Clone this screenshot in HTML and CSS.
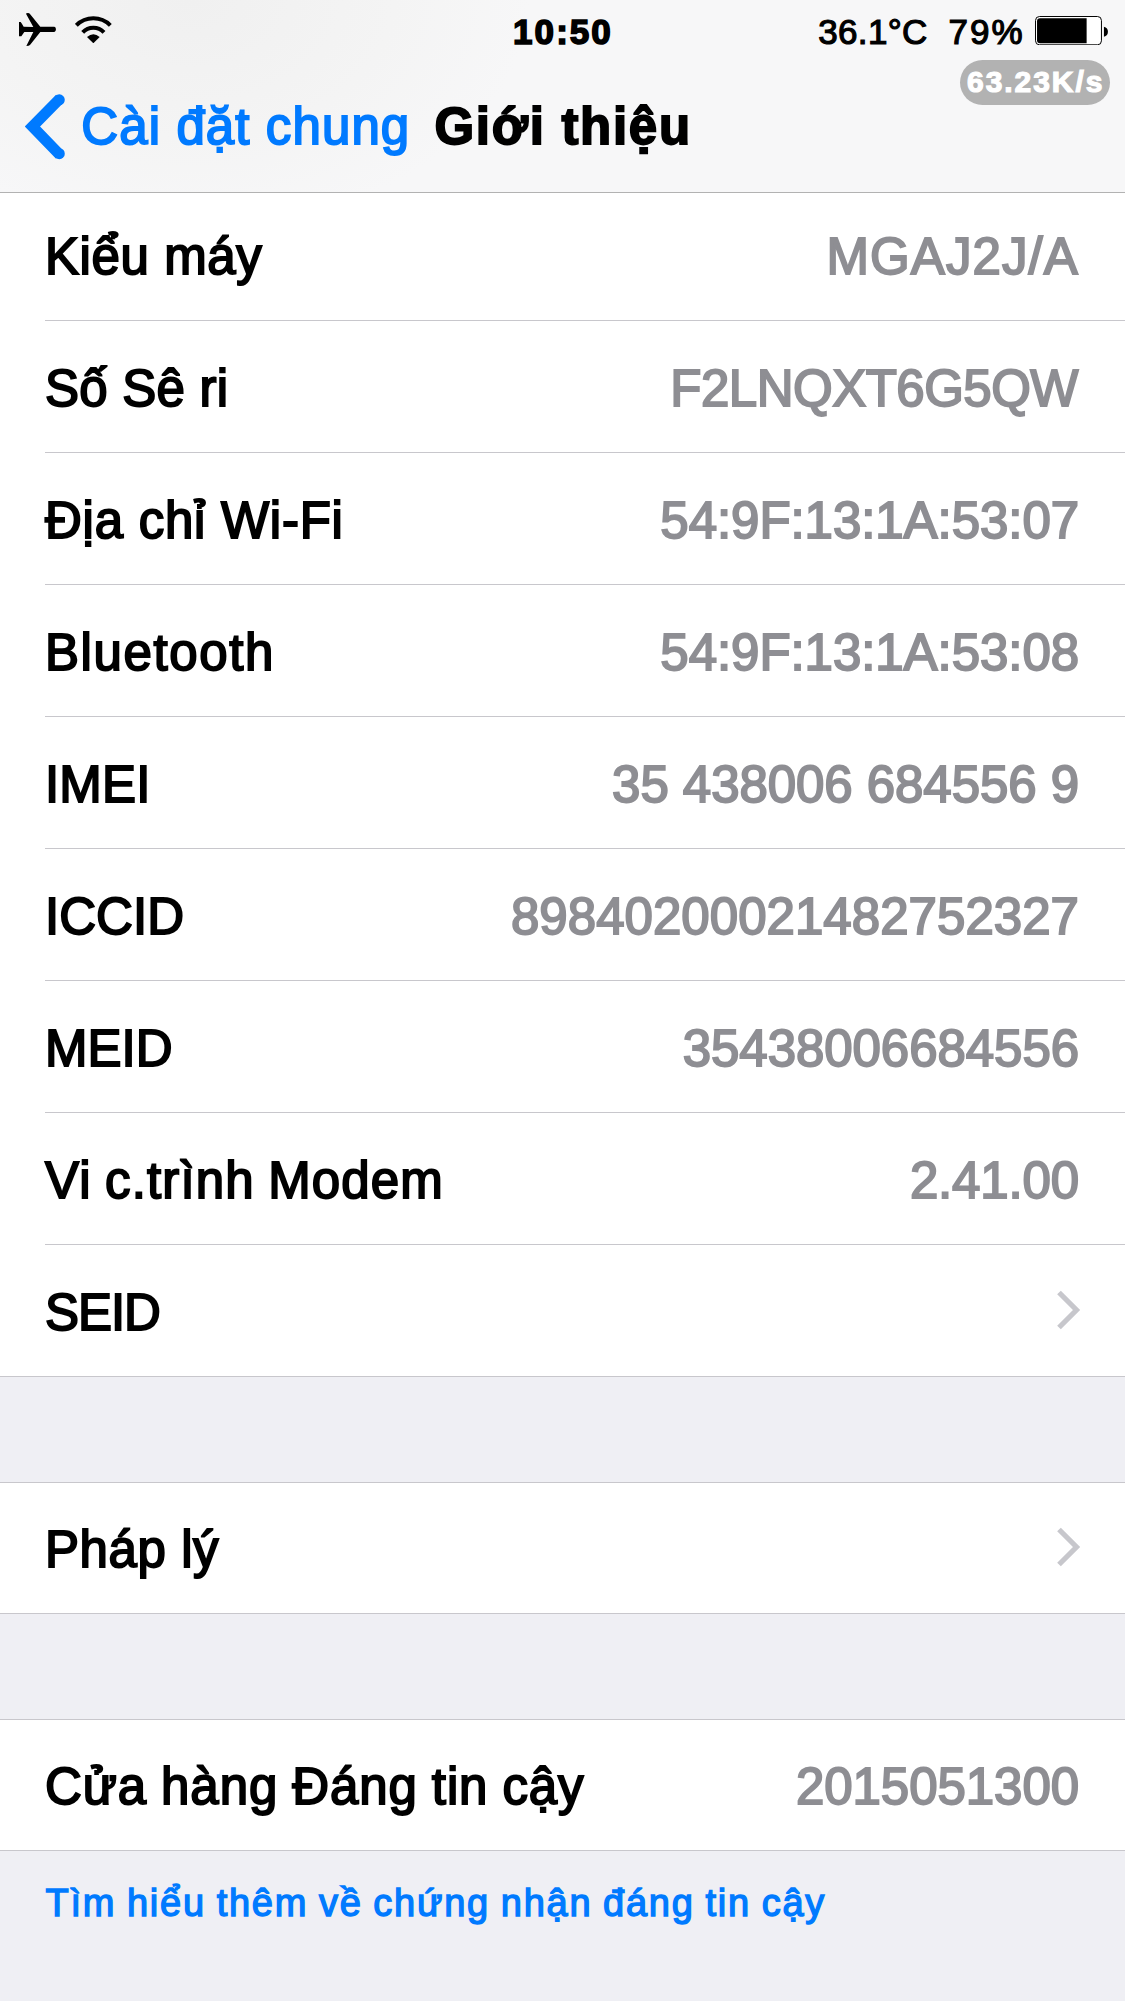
FILE: index.html
```html
<!DOCTYPE html>
<html lang="vi">
<head>
<meta charset="utf-8">
<title>Giới thiệu</title>
<link rel="stylesheet" href="styles.css">
</head>
<body>
<header class="header">
  <div class="status">
    <div class="status-left">
      <svg class="plane" viewBox="57 39 112 99" width="37.3" height="33"><path d="M57 66h5q3 4 9 14l29 1L78 41q1-2 6-2 4 0 6 3l31 38h42q5 1 5 8t-5 8h-42l-31 39q-3 3-11 3l21-42H73l-9 13h-7z"/></svg>
      <svg class="wifi" viewBox="226 47 110 82" width="36.7" height="27.3"><g fill="none" stroke="#000" stroke-width="12"><path d="M230 75A72 72 0 0 1 332 75M249 96A44 44 0 0 1 313 96"/></g><path d="M262 110q19-16 38 0l-19 19z"/></svg>
    </div>
    <div class="clock">10:50</div>
    <div class="status-right">
      <span class="temp">36.1°C</span>
      <span class="percent">79%</span>
      <svg class="battery" viewBox="735 47 220 88" width="73.3" height="29.3"><rect x="736.5" y="48.5" width="198" height="85" rx="12" fill="#fff" stroke="#000" stroke-width="3"/><path d="M750 54h140v75H750q-9 0-9-9V63q0-9 9-9z"/><path d="M942 79q12 3 12 15t-12 15z"/></svg>
    </div>
    <span class="speed">63.23K/s</span>
  </div>
  <nav class="nav">
    <a class="back">
      <svg viewBox="25 94 40 66" width="40" height="66"><path d="M60 98.5L32.5 126.5l27.5 28.5" fill="none" stroke="#007aff" stroke-width="11"/><g fill="#007aff"><circle cx="59.3" cy="99.8" r="5.5"/><circle cx="59.3" cy="153.7" r="5.5"/></g></svg>
      <span>Cài đặt chung</span>
    </a>
    <h1 class="title">Giới thiệu</h1>
  </nav>
</header>
<main>
  <section class="group group-first">
    <div class="row"><span class="label ls-model">Kiểu máy</span><span class="value ls-model-value">MGAJ2J/A</span></div>
    <div class="row"><span class="label ls-serial">Số Sê ri</span><span class="value ls-serial-value">F2LNQXT6G5QW</span></div>
    <div class="row"><span class="label ls-wifi">Địa chỉ Wi-Fi</span><span class="value">54:9F:13:1A:53:07</span></div>
    <div class="row"><span class="label ls-bluetooth">Bluetooth</span><span class="value">54:9F:13:1A:53:08</span></div>
    <div class="row"><span class="label ls-imei">IMEI</span><span class="value">35 438006 684556 9</span></div>
    <div class="row"><span class="label ls-id">ICCID</span><span class="value ls-iccid-value">89840200021482752327</span></div>
    <div class="row"><span class="label ls-id">MEID</span><span class="value">35438006684556</span></div>
    <div class="row"><span class="label ls-modem">Vi c.trình Modem</span><span class="value ls-modem-value">2.41.00</span></div>
    <div class="row"><span class="label ls-seid">SEID</span><svg class="chevron" viewBox="0 0 24 40" width="24" height="40"><path d="M2 2.5L19.5 20 2 37.5"/></svg></div>
  </section>
  <section class="group">
    <div class="row"><span class="label">Pháp lý</span><svg class="chevron" viewBox="0 0 24 40" width="24" height="40"><path d="M2 2.5L19.5 20 2 37.5"/></svg></div>
  </section>
  <section class="group">
    <div class="row"><span class="label ls-trust">Cửa hàng Đáng tin cậy</span><span class="value">2015051300</span></div>
  </section>
  <a class="footnote">Tìm hiểu thêm về chứng nhận đáng tin cậy</a>
</main>
</body>
</html>
```
FILE: styles.css
```css
* { box-sizing: border-box; }

body {
  margin: 0;
  height: 2001px;
  overflow: hidden;
  background: #efeff4;
  font-family: "Liberation Sans", Arial, sans-serif;
  color: #000;
}

svg { display: block; flex: none; }
span, a, h1 { white-space: nowrap; }

/* Header */
.header {
  height: 193px;
  border-bottom: 1px solid #b2b2b2;
  background: radial-gradient(ellipse 340px 230px at 190px 0, #f0f0f0, #f4f4f4 60%, rgba(247, 247, 247, 0)), #f7f7f8;
}

.status {
  position: relative;
  display: grid;
  grid-template-columns: 1fr auto 1fr;
  height: 86px;
  padding: 12px 17px 0 19px;
  font-size: 35px;
  line-height: 40px;
}

.status-left { display: flex; gap: 19px; padding-top: 1px; }
.wifi { margin-top: 3px; }

.clock {
  margin-left: -1px;
  font-weight: 700;
  letter-spacing: 2.05px;
  -webkit-text-stroke: 1.6px #000;
}

.status-right {
  display: flex;
  justify-content: flex-end;
  -webkit-text-stroke: 1.2px #000;
}
.temp { margin-right: 21px; letter-spacing: 0.3px; }
.percent { margin-right: 10px; letter-spacing: 2.03px; }
.battery { margin-top: 4px; }

.speed {
  position: absolute;
  top: 60px;
  right: 15px;
  width: 150px;
  height: 45px;
  padding-left: 7px;
  border-radius: 23px;
  background: #b2b2b2;
  color: #fff;
  font-size: 30px;
  font-weight: 700;
  line-height: 43px;
  letter-spacing: 1.95px;
  -webkit-text-stroke: 1.2px #fff;
}

.nav {
  display: flex;
  padding: 8px 0 0 25px;
  font-size: 51px;
  line-height: 66px;
}

.back {
  display: flex;
  gap: 16.3px;
  width: 409.5px;
  color: #007aff;
  letter-spacing: 1.1px;
  -webkit-text-stroke: 1.9px #007aff;
}

.title {
  margin: 0;
  font-size: 51px;
  font-weight: 700;
  letter-spacing: 1.7px;
  -webkit-text-stroke: 1.8px #000;
}

/* Grouped table */
.group {
  margin-bottom: 105px;
  border-top: 1px solid #c8c7cc;
  border-bottom: 1px solid #c8c7cc;
  background: #fff;
}
.group:last-of-type { margin-bottom: 0; }
.group-first { border-top: 0; }

.row {
  display: flex;
  align-items: flex-end;
  justify-content: space-between;
  height: 132px;
  margin-left: 45px;
  padding: 0 46px 35px 0;
  border-bottom: 1px solid #c8c7cc;
  font-size: 51px;
  line-height: 57px;
}
.row:last-child { height: 130px; border-bottom: 0; }
.group-first .row:first-child { height: 128px; }
.group-first .row:last-child { height: 131px; }

.label {
  letter-spacing: 0.57px;
  -webkit-text-stroke: 1.9px #000;
}
.value {
  color: #8e8e93;
  letter-spacing: -0.06px;
  -webkit-text-stroke: 1.9px #8e8e93;
}

.chevron {
  margin: 0 -2px 11.5px 0;
  fill: none;
  stroke: #c7c7cc;
  stroke-width: 5.2;
}

/* Per-string tracking */
.ls-model { letter-spacing: 0.6px; }
.ls-serial { letter-spacing: 0.25px; }
.ls-wifi { letter-spacing: 0.74px; }
.ls-bluetooth { letter-spacing: 1.6px; }
.ls-imei { letter-spacing: 0.2px; }
.ls-id { letter-spacing: 0.05px; }
.ls-modem { letter-spacing: 1.15px; word-spacing: -2px; }
.ls-seid { letter-spacing: -1.07px; }
.ls-trust { letter-spacing: 0.9px; word-spacing: -1px; }
.ls-model-value { letter-spacing: 1.1px; }
.ls-serial-value { margin-right: 1px; letter-spacing: -0.51px; }
.ls-iccid-value { letter-spacing: 0.04px; }
.ls-modem-value { letter-spacing: -0.15px; }

.footnote {
  display: block;
  padding: 30px 0 0 45.5px;
  color: #007aff;
  font-size: 38px;
  line-height: 44px;
  letter-spacing: 1.75px;
  word-spacing: -1.5px;
  -webkit-text-stroke: 1.4px #007aff;
}
```
